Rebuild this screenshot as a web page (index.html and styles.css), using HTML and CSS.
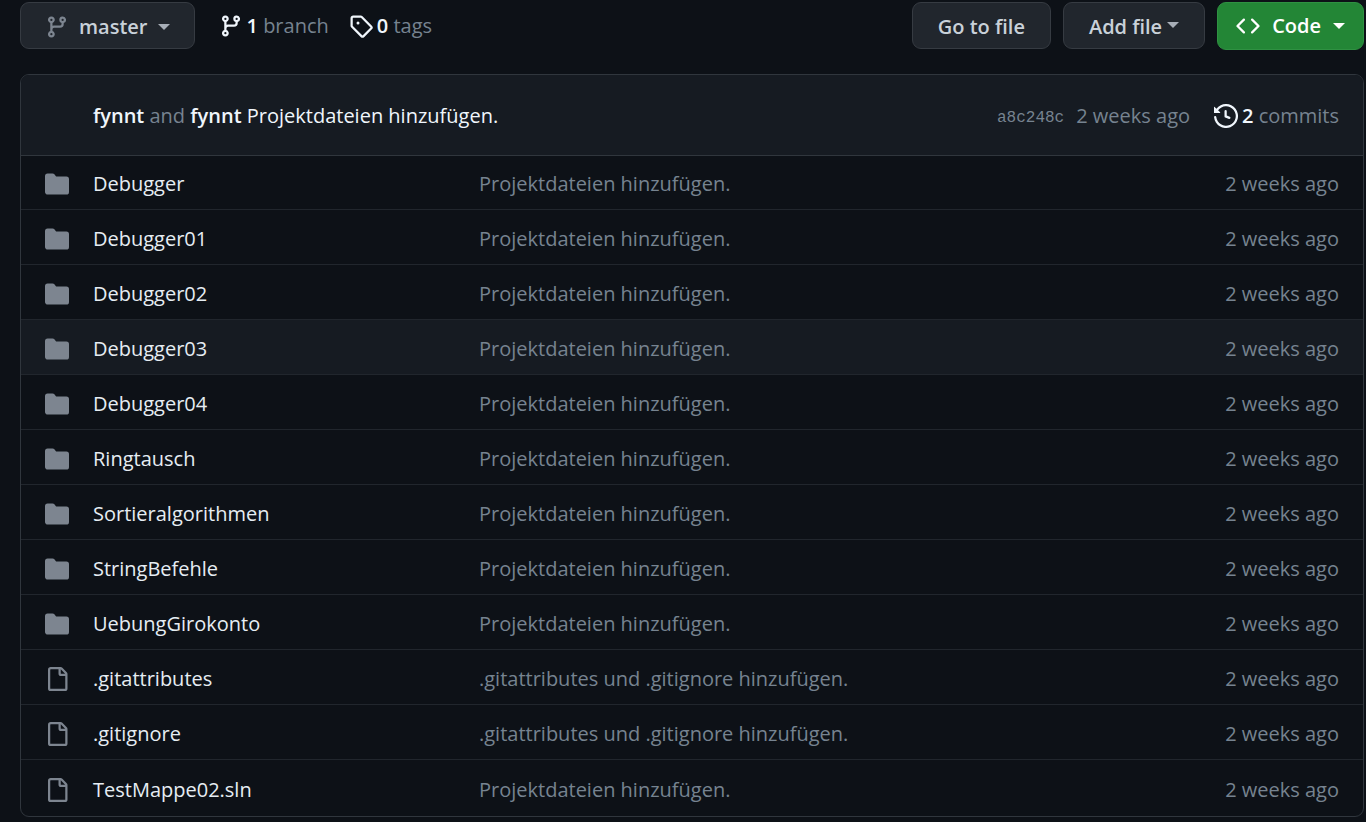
FILE: index.html
```html
<!DOCTYPE html>
<html lang="en">
<head>
<meta charset="utf-8">
<title>Repository files</title>
<link rel="stylesheet" href="styles.css">
<script src="files.js" defer></script>
</head>
<body>
<svg class="sprite" aria-hidden="true">
  <symbol id="branch" viewBox="0 0 16 16"><path d="M9.5 3.25a2.25 2.25 0 1 1 3 2.122V6A2.5 2.5 0 0 1 10 8.5H6a1 1 0 0 0-1 1v1.128a2.251 2.251 0 1 1-1.5 0V5.372a2.25 2.25 0 1 1 1.5 0v1.836A2.493 2.493 0 0 1 6 7h4a1 1 0 0 0 1-1v-.628A2.25 2.25 0 0 1 9.5 3.25Zm-6 0a.75.75 0 1 0 1.5 0 .75.75 0 0 0-1.5 0Zm8.25-.75a.75.75 0 1 0 0 1.5.75.75 0 0 0 0-1.5ZM4.25 12a.75.75 0 1 0 0 1.5.75.75 0 0 0 0-1.5Z"/></symbol>
  <symbol id="tag" viewBox="0 0 16 16"><path d="M1 7.775V2.75C1 1.784 1.784 1 2.75 1h5.025c.464 0 .91.184 1.238.513l6.25 6.25a1.75 1.75 0 0 1 0 2.474l-5.026 5.026a1.75 1.75 0 0 1-2.474 0l-6.25-6.25A1.752 1.752 0 0 1 1 7.775Zm1.5 0c0 .066.026.13.073.177l6.25 6.25a.25.25 0 0 0 .354 0l5.025-5.025a.25.25 0 0 0 0-.354l-6.25-6.25a.25.25 0 0 0-.177-.073H2.75a.25.25 0 0 0-.25.25ZM6 5a1 1 0 1 1 0 2 1 1 0 0 1 0-2Z"/></symbol>
  <symbol id="history" viewBox="0 0 16 16"><path d="m.427 1.927 1.215 1.215a8.002 8.002 0 1 1-1.6 5.685.75.75 0 1 1 1.493-.154 6.5 6.5 0 1 0 1.18-4.458l1.358 1.358A.25.25 0 0 1 3.896 6H.25A.25.25 0 0 1 0 5.75V2.104a.25.25 0 0 1 .427-.177ZM7.75 4a.75.75 0 0 1 .75.75v2.992l2.028.812a.75.75 0 0 1-.557 1.392l-2.5-1A.751.751 0 0 1 7 8.25v-3.5A.75.75 0 0 1 7.75 4Z"/></symbol>
  <symbol id="code" viewBox="0 0 16 16"><path d="m11.28 3.22 4.25 4.25a.75.75 0 0 1 0 1.06l-4.25 4.25a.749.749 0 1 1-1.06-1.06L13.94 8l-3.72-3.72a.749.749 0 1 1 1.06-1.06Zm-6.56 0a.749.749 0 1 1 1.06 1.06L2.06 8l3.72 3.72a.749.749 0 1 1-1.06 1.06L.47 8.53a.75.75 0 0 1 0-1.06Z"/></symbol>
  <symbol id="folder" viewBox="0 0 16 16"><path d="M1.75 1A1.75 1.75 0 0 0 0 2.75v10.5C0 14.216.784 15 1.75 15h12.5A1.75 1.75 0 0 0 16 13.25v-8.5A1.75 1.75 0 0 0 14.25 3H7.5a.25.25 0 0 1-.2-.1l-.9-1.2C6.07 1.26 5.55 1 5 1H1.75Z"/></symbol>
  <symbol id="file" viewBox="0 0 16 16"><path d="M2 1.75C2 .784 2.784 0 3.75 0h6.586c.464 0 .909.184 1.237.513l2.914 2.914c.329.328.513.773.513 1.237v9.586A1.75 1.75 0 0 1 13.25 16h-9.5A1.75 1.75 0 0 1 2 14.25Zm1.75-.25a.25.25 0 0 0-.25.25v12.5c0 .138.112.25.25.25h9.5a.25.25 0 0 0 .25-.25V6h-2.75A1.75 1.75 0 0 1 9 4.25V1.5Zm6.75.062V4.25c0 .138.112.25.25.25h2.688l-.011-.013-2.914-2.914-.013-.011Z"/></symbol>
</svg>
<main class="page">
  <nav class="toolbar" aria-label="Repository">
    <button class="btn btn-branch" type="button"><svg class="icon muted"><use href="#branch"/></svg>master<span class="caret"></span></button>
    <div class="refs">
      <a class="stat" href="#branches"><svg class="icon"><use href="#branch"/></svg><span><strong>1</strong> branch</span></a>
      <a class="stat" href="#tags"><svg class="icon"><use href="#tag"/></svg><span><strong>0</strong> tags</span></a>
    </div>
    <div class="actions">
      <button class="btn" type="button">Go to file</button>
      <button class="btn btn-add" type="button">Add file<span class="caret"></span></button>
      <button class="btn btn-code" type="button"><svg class="icon"><use href="#code"/></svg>Code<span class="caret"></span></button>
    </div>
  </nav>
  <section class="files">
    <header class="commit">
      <p class="message"><a class="author" href="#fynnt">fynnt</a> and <a class="author" href="#fynnt">fynnt</a> <a href="#commit">Projektdateien hinzufügen.</a></p>
      <a class="hash" href="#commit">a8c248c</a>
      <time class="when">2 weeks ago</time>
      <a class="stat" href="#commits"><svg class="icon"><use href="#history"/></svg><span><strong>2</strong> commits</span></a>
    </header>
    <table class="list">
      <tbody id="rows"></tbody>
    </table>
  </section>
</main>
</body>
</html>
```
FILE: files.js
```js
const added = "Projektdateien hinzufügen.";
const git = ".gitattributes und .gitignore hinzufügen.";
const files = [
  ["folder", "Debugger", added],
  ["folder", "Debugger01", added],
  ["folder", "Debugger02", added],
  ["folder", "Debugger03", added, "active"],
  ["folder", "Debugger04", added],
  ["folder", "Ringtausch", added],
  ["folder", "Sortieralgorithmen", added],
  ["folder", "StringBefehle", added],
  ["folder", "UebungGirokonto", added],
  ["file", ".gitattributes", git],
  ["file", ".gitignore", git],
  ["file", "TestMappe02.sln", added]
];
document.getElementById("rows").innerHTML = files.map(([icon, name, message, state = ""]) => `
  <tr class="row ${state}">
    <td class="kind"><svg class="icon"><use href="#${icon}"/></svg></td>
    <td class="name"><a href="#${name}">${name}</a></td>
    <td class="note"><a href="#commit">${message}</a></td>
    <td class="age"><time>2 weeks ago</time></td>
  </tr>`).join("");
```
FILE: styles.css
```css
* { box-sizing: border-box; }
body {
  margin: 0;
  background: #0d1117;
  color: #768390;
  font: 20px/30px "Open Sans", "Noto Sans", sans-serif;
}
a { color: inherit; text-decoration: none; }
strong { color: #f0f6fc; font-weight: 600; }
.sprite { display: none; }
.icon { width: 24px; height: 24px; flex: none; fill: currentColor; display: block; }
.muted, .kind { color: #7d8590; }
.page { padding: 2px 2px 4px 20px; }

.toolbar { display: flex; align-items: flex-start; gap: 24px; margin-bottom: 24px; }
.btn {
  display: flex;
  align-items: center;
  height: 47px;
  padding: 3px 25px 0;
  border: 1px solid #363b42;
  border-radius: 9px;
  background: #21262d;
  color: #c9d1d9;
  font: 600 20px/30px "Open Sans", "Noto Sans", sans-serif;
  white-space: nowrap;
}
.caret {
  border: 6px solid transparent;
  border-top-color: currentColor;
  border-bottom: 0;
  opacity: 0.8;
}
.btn-branch { gap: 10px; padding: 3px 24px 0; }
.btn-add { gap: 5px; }
.btn-add .caret { margin-bottom: 5px; }
.btn-code { gap: 12px; height: 48px; padding: 0 18px; background: #238636; border-color: #2f9142; color: #fff; }
.btn-code .caret { opacity: 1; }
.refs { display: flex; gap: 20px; padding-top: 9px; }
.stat { display: flex; align-items: center; gap: 4px; white-space: nowrap; }
.stat .icon { color: #f0f6fc; }
.actions { display: flex; gap: 12px; margin-left: auto; }

.files { border: 1px solid #30363d; border-radius: 9px; overflow: hidden; }
.commit {
  display: flex;
  align-items: center;
  height: 81px;
  padding: 2px 24px 0 72px;
  background: #161b22;
  border-bottom: 1px solid #30363d;
}
.message { flex: 1; margin: 0; }
.message a { color: #f0f6fc; }
.author { font-weight: 600; }
.hash { font: 16px/30px "Liberation Mono", monospace; margin-right: 12px; padding-top: 3px; }
.when { margin-right: 24px; }

.list { width: 100%; border-spacing: 0; table-layout: fixed; }
.row td { height: 55px; padding: 3px 0 0; border-bottom: 1px solid #21262d; }
.row:first-child td { height: 54px; }
.row:last-child td { height: 56px; border-bottom: 0; }
.active td { background: #161b22; }
.row .kind { width: 72px; padding-left: 24px; }
.row .name { width: 386px; color: #e6edf3; }
.row .age { width: 180px; padding-right: 24px; text-align: right; }
```
